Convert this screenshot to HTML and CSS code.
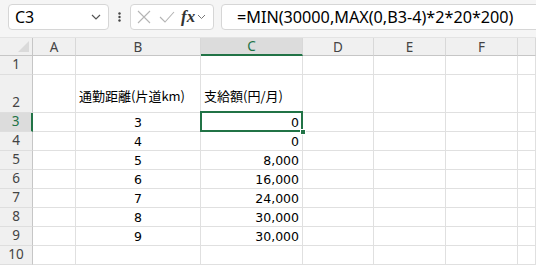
FILE: index.html
```html
<!DOCTYPE html>
<html lang="ja">
<head>
    <meta charset="UTF-8">
    <title>Sheet1</title>
    <link rel="stylesheet" href="styles.css">
</head>
<body>
    <div class="formula-bar">
        <div class="name-box">
            <span>C3</span>
            <svg width="10" height="6" viewBox="0 0 10 6"><path d="M1 1 L5 5 L9 1" fill="none" stroke="#555" stroke-width="1.2"/></svg>
        </div>
        <div class="bar-dots">
            <svg width="3" height="10" viewBox="0 0 3 10"><circle cx="1.5" cy="1.5" r="1.2" fill="#444"/><circle cx="1.5" cy="5" r="1.2" fill="#444"/><circle cx="1.5" cy="8.5" r="1.2" fill="#444"/></svg>
        </div>
        <div class="fx-box">
            <svg class="icon-x" width="14" height="14" viewBox="0 0 14 14"><path d="M1 1 L13 13 M13 1 L1 13" stroke="#b4b4b4" stroke-width="1.1" fill="none"/></svg>
            <svg class="icon-check" width="16" height="12" viewBox="0 0 16 12"><path d="M1 6 L6 11 L15 1" stroke="#b4b4b4" stroke-width="1.1" fill="none"/></svg>
            <span class="fx">fx</span>
            <svg width="9" height="6" viewBox="0 0 9 6"><path d="M1 1 L4.5 4.5 L8 1" fill="none" stroke="#777" stroke-width="1"/></svg>
        </div>
        <div class="formula-input">=MIN(30000,MAX(0,B3-4)*2*20*200)</div>
    </div>

    <div class="sheet">
        <div class="corner"><span class="corner-tri"></span></div>
        <div class="col-head">A</div>
        <div class="col-head">B</div>
        <div class="col-head active">C</div>
        <div class="col-head">D</div>
        <div class="col-head">E</div>
        <div class="col-head">F</div>
        <div class="col-head"></div>

        <div class="row-head">1</div>
        <div class="cell"></div><div class="cell"></div><div class="cell"></div><div class="cell"></div><div class="cell"></div><div class="cell"></div><div class="cell"></div>

        <div class="row-head tall">2</div>
        <div class="cell tall"></div>
        <div class="cell tall text">通勤距離(片道km)</div>
        <div class="cell tall text">支給額(円/月)</div>
        <div class="cell tall"></div><div class="cell tall"></div><div class="cell tall"></div><div class="cell tall"></div>

        <div class="row-head active">3</div>
        <div class="cell"></div>
        <div class="cell center">3</div>
        <div class="cell num selected">0<span class="fill-handle"></span></div>
        <div class="cell"></div><div class="cell"></div><div class="cell"></div><div class="cell"></div>

        <div class="row-head">4</div>
        <div class="cell"></div>
        <div class="cell center">4</div>
        <div class="cell num">0</div>
        <div class="cell"></div><div class="cell"></div><div class="cell"></div><div class="cell"></div>

        <div class="row-head">5</div>
        <div class="cell"></div>
        <div class="cell center">5</div>
        <div class="cell num">8,000</div>
        <div class="cell"></div><div class="cell"></div><div class="cell"></div><div class="cell"></div>

        <div class="row-head">6</div>
        <div class="cell"></div>
        <div class="cell center">6</div>
        <div class="cell num">16,000</div>
        <div class="cell"></div><div class="cell"></div><div class="cell"></div><div class="cell"></div>

        <div class="row-head">7</div>
        <div class="cell"></div>
        <div class="cell center">7</div>
        <div class="cell num">24,000</div>
        <div class="cell"></div><div class="cell"></div><div class="cell"></div><div class="cell"></div>

        <div class="row-head">8</div>
        <div class="cell"></div>
        <div class="cell center">8</div>
        <div class="cell num">30,000</div>
        <div class="cell"></div><div class="cell"></div><div class="cell"></div><div class="cell"></div>

        <div class="row-head">9</div>
        <div class="cell"></div>
        <div class="cell center">9</div>
        <div class="cell num">30,000</div>
        <div class="cell"></div><div class="cell"></div><div class="cell"></div><div class="cell"></div>

        <div class="row-head">10</div>
        <div class="cell"></div><div class="cell"></div><div class="cell"></div><div class="cell"></div><div class="cell"></div><div class="cell"></div><div class="cell"></div>
    </div>
</body>
</html>
```

FILE: styles.css
```css
/* Base */
* {
    box-sizing: border-box;
}

body {
    margin: 0;
    width: 536px;
    height: 266px;
    overflow: hidden;
    background-color: #ffffff;
    font-family: "Noto Sans", "Noto Sans CJK JP", sans-serif;
    color: #000;
}

/* Formula bar */
.formula-bar {
    display: flex;
    align-items: center;
    height: 38px;
    padding: 0 0 4px 8px;
    background-color: #f5f5f5;
    border-bottom: 1px solid #e3e3e3;
}

.name-box {
    display: flex;
    align-items: center;
    justify-content: space-between;
    width: 101px;
    height: 26px;
    padding: 0 7px 0 6px;
    background-color: #fff;
    border: 1px solid #d6d6d6;
    border-radius: 4px;
    font-size: 16px;
}

.bar-dots {
    display: flex;
    justify-content: center;
    width: 21px;
}

.fx-box {
    display: flex;
    align-items: center;
    width: 84px;
    height: 26px;
    padding-left: 6px;
    background-color: #fff;
    border: 1px solid #d6d6d6;
    border-radius: 4px;
}

.icon-x {
    margin-right: 8px;
}

.icon-check {
    margin-right: 6px;
}

.fx {
    font-family: "Liberation Serif", serif;
    font-style: italic;
    font-weight: bold;
    font-size: 17px;
    color: #333;
    margin-right: 2px;
}

.formula-input {
    flex: 1;
    height: 26px;
    margin-left: 7px;
    margin-right: -12px;
    padding-left: 15px;
    line-height: 24px;
    background-color: #fff;
    border: 1px solid #d6d6d6;
    border-radius: 4px;
    font-size: 16.2px;
    white-space: nowrap;
}

/* Sheet grid */
.sheet {
    display: grid;
    grid-template-columns: 33px 43px 125px 102px 71px 72px 72px 18px;
    grid-template-rows: 18px 19px 38px repeat(8, 19px);
    font-size: 13px;
}

.corner {
    position: relative;
    background-color: #f0f0f0;
    border-right: 1px solid #c6c6c6;
    border-bottom: 1px solid #c6c6c6;
}

.corner-tri {
    position: absolute;
    right: 3px;
    bottom: 3px;
    width: 0;
    height: 0;
    border-left: 11px solid transparent;
    border-bottom: 11px solid #dadada;
}

.col-head {
    display: flex;
    align-items: center;
    justify-content: center;
    background-color: #f0f0f0;
    border-right: 1px solid #d8d8d8;
    border-bottom: 1px solid #c6c6c6;
    color: #444;
    font-size: 13.5px;
}

.col-head.active {
    background-color: #dcdcdc;
    border-bottom: 2px solid #217346;
    color: #217346;
}

.row-head {
    display: flex;
    align-items: flex-end;
    justify-content: center;
    padding-bottom: 1px;
    background-color: #f0f0f0;
    border-right: 1px solid #c6c6c6;
    border-bottom: 1px solid #dedede;
    color: #444;
    font-size: 13.5px;
}

.row-head.active {
    background-color: #dcdcdc;
    border-right: 2px solid #217346;
    color: #217346;
}

.cell {
    position: relative;
    display: flex;
    align-items: flex-end;
    padding: 0 3px 1px;
    border-right: 1px solid #e0e0e0;
    border-bottom: 1px solid #e0e0e0;
    white-space: nowrap;
}

.cell.text {
    font-family: "Noto Sans CJK JP", sans-serif;
    padding-bottom: 7px;
}

.cell.center {
    justify-content: center;
    font-family: "DejaVu Sans", sans-serif;
    font-size: 12.5px;
}

.cell.num {
    justify-content: flex-end;
    font-family: "DejaVu Sans", sans-serif;
    font-size: 12.5px;
}

.cell.selected::after {
    content: "";
    position: absolute;
    top: -2px;
    left: -1px;
    right: -1px;
    bottom: -1px;
    border: 2px solid #217346;
}

.fill-handle {
    position: absolute;
    right: -4px;
    bottom: -4px;
    width: 6px;
    height: 6px;
    background-color: #217346;
    border: 1px solid #fff;
    z-index: 1;
}
```
